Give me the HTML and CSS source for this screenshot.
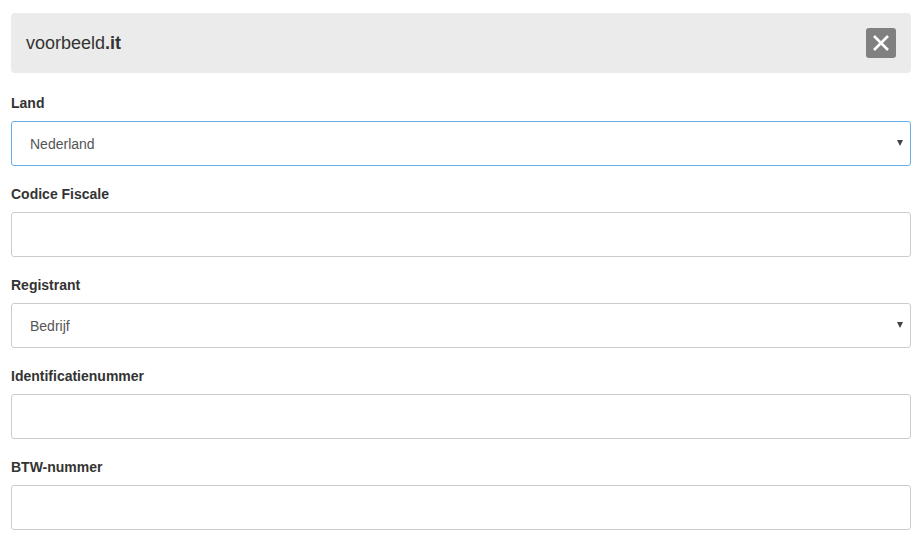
FILE: index.html
```html
<!DOCTYPE html>
<html lang="nl">
<head>
  <meta charset="UTF-8" />
  <meta name="viewport" content="width=device-width, initial-scale=1.0" />
  <title>voorbeeld.it</title>
  <link rel="stylesheet" href="styles.css">
</head>
<body>
  <div class="panel">
    <header class="panel-head">
      <span class="domain">voorbeeld<b>.it</b></span>
      <button class="close" type="button" aria-label="Sluiten">
        <svg width="30" height="30" viewBox="0 0 30 30">
          <path d="M8 8 L22 22 M22 8 L8 22" stroke="#fff" stroke-width="2.6" fill="none" />
        </svg>
      </button>
    </header>

    <form class="fields">
      <div class="field">
        <label for="land">Land</label>
        <div class="select is-focus">
          <select id="land">
            <option>Nederland</option>
            <option>België</option>
            <option>Italia</option>
          </select>
        </div>
      </div>

      <div class="field">
        <label for="codice">Codice Fiscale</label>
        <input type="text" id="codice" />
      </div>

      <div class="field">
        <label for="registrant">Registrant</label>
        <div class="select">
          <select id="registrant">
            <option>Bedrijf</option>
            <option>Particulier</option>
          </select>
        </div>
      </div>

      <div class="field">
        <label for="ident">Identificatienummer</label>
        <input type="text" id="ident" />
      </div>

      <div class="field">
        <label for="btw">BTW-nummer</label>
        <input type="text" id="btw" />
      </div>
    </form>
  </div>
</body>
</html>
```

FILE: styles.css
```css
* { box-sizing: border-box; }
body {
  margin: 0;
  font-family: 'Liberation Sans', Arial, sans-serif;
  color: #333;
  background: #fff;
}
.panel {
  padding: 13px 11px;
}
.panel-head {
  display: flex;
  justify-content: space-between;
  align-items: center;
  height: 60px;
  padding: 0 15px;
  background-color: #ebebeb;
  border-radius: 4px;
}
.domain {
  font-size: 18px;
  color: #333;
}
.domain b {
  font-weight: bold;
}
.close {
  width: 30px;
  height: 30px;
  padding: 0;
  border: none;
  border-radius: 3px;
  background-color: #808080;
  cursor: pointer;
}
.close svg {
  display: block;
}
.fields {
  display: flex;
  flex-direction: column;
  gap: 18px;
  margin-top: 20px;
}
.field label {
  display: block;
  font-size: 14px;
  font-weight: bold;
  line-height: 20px;
  margin-bottom: 8px;
  color: #333;
}
input, select {
  display: block;
  width: 100%;
  height: 45px;
  padding: 0 18px;
  font-family: inherit;
  font-size: 14px;
  color: #555;
  background: #fff;
  border: 1px solid #ccc;
  border-radius: 3px;
  outline: none;
}
select {
  appearance: none;
  -webkit-appearance: none;
  cursor: pointer;
}
.select {
  position: relative;
}
.select::after {
  content: "";
  position: absolute;
  right: 8px;
  top: 19px;
  width: 0;
  height: 0;
  border-left: 3px solid transparent;
  border-right: 3px solid transparent;
  border-top: 6px solid #444;
  pointer-events: none;
}
.select.is-focus select {
  border-color: #66afe9;
}
```
